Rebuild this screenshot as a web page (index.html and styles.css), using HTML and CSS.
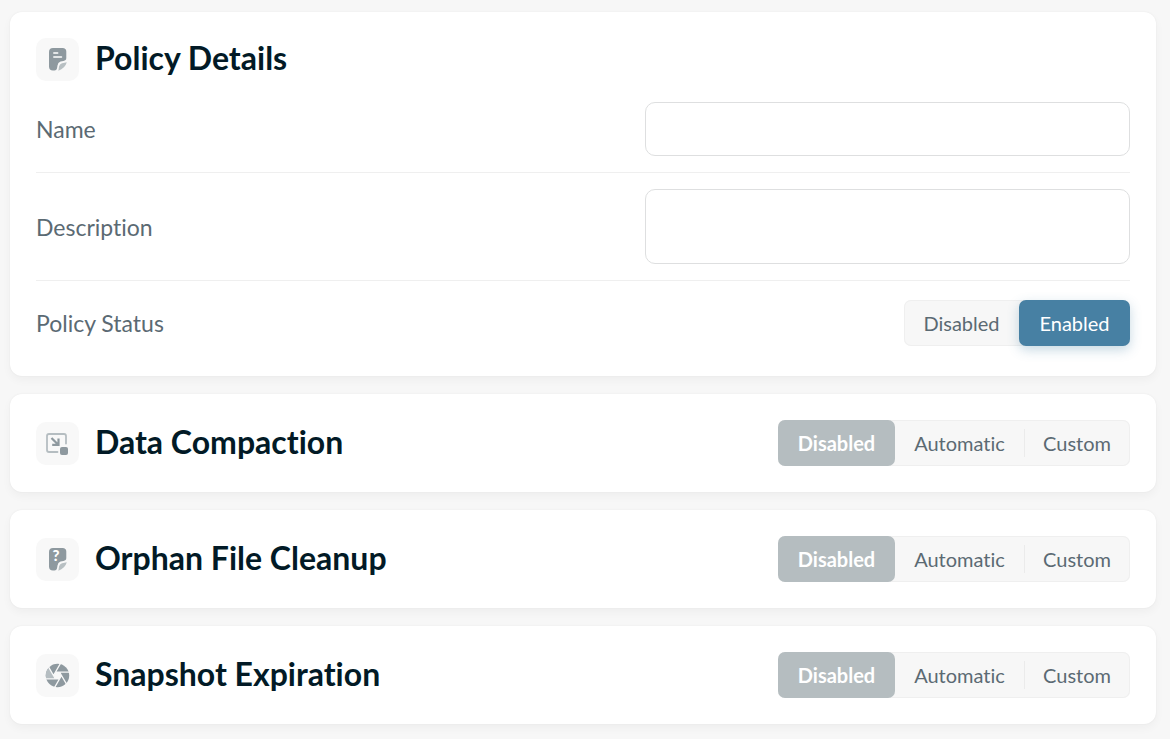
FILE: index.html
```
<!DOCTYPE html>
<html lang="en">
<head>
    <meta charset="UTF-8">
    <meta name="viewport" content="width=device-width, initial-scale=1.0">
    <title>Policy Details</title>
    <link rel="stylesheet" href="styles.css">
</head>
<body>
    <main class="page">
        <section class="card">
            <div class="card-title">
                <svg class="icon" viewBox="0 0 43 43" aria-hidden="true">
                    <path class="dark" d="M17 10H26.500Q30.300 10 30.300 13.500V20Q30.300 22.600 27.500 22.900L24.500 23.500Q21.800 24.300 21.500 27.500L21 30.500Q20.500 32.500 18.500 32.500H17Q13 32.500 13 28.500V14Q13 10 17 10Z"/>
                    <path class="light" d="M22.400 32.800L23 28.500Q23.500 26 26 25.300L30.800 24.300Q29 30.500 22.400 32.800Z"/>
                    <path class="lines" d="M17.800 15H21.700M17.800 19H25.500"/>
                </svg>
                <h2>Policy Details</h2>
            </div>
            <div class="row">
                <label for="name">Name</label>
                <input class="field" type="text" id="name">
            </div>
            <div class="row">
                <label for="description">Description</label>
                <textarea class="field field-tall" id="description"></textarea>
            </div>
            <div class="row row-status">
                <span id="status-label">Policy Status</span>
                <div class="switch switch-two" role="group" aria-labelledby="status-label">
                    <button type="button" aria-pressed="false">Disabled</button>
                    <button type="button" class="enabled" aria-pressed="true">Enabled</button>
                </div>
            </div>
        </section>

        <section class="card card-line">
            <div class="card-title">
                <svg class="icon" viewBox="0 0 43 43" aria-hidden="true">
                    <path class="frame" d="M30 21.500V14Q30 12 28 12H13Q11 12 11 14V28Q11 30 13 30H21.500"/>
                    <path class="arrow" d="M15.500 16L22 22.500M22.500 16.500V22.800H16.200"/>
                    <rect class="dark" x="24" y="25" width="8" height="8" rx="2"/>
                </svg>
                <h2 id="compaction">Data Compaction</h2>
            </div>
            <div class="switch switch-three" role="group" aria-labelledby="compaction">
                <button type="button" class="disabled" aria-pressed="true">Disabled</button>
                <button type="button" aria-pressed="false">Automatic</button>
                <button type="button" class="divided" aria-pressed="false">Custom</button>
            </div>
        </section>

        <section class="card card-line">
            <div class="card-title">
                <svg class="icon" viewBox="0 0 43 43" aria-hidden="true">
                    <path class="dark" d="M17 10H26.500Q30.300 10 30.300 13.500V20Q30.300 22.600 27.500 22.900L24.500 23.500Q21.800 24.300 21.500 27.500L21 30.500Q20.500 32.500 18.500 32.500H17Q13 32.500 13 28.500V14Q13 10 17 10Z"/>
                    <path class="light" d="M22.400 32.800L23 28.500Q23.500 26 26 25.300L30.800 24.300Q29 30.500 22.400 32.800Z"/>
                    <text class="mark" x="20" y="23">?</text>
                </svg>
                <h2 id="orphan">Orphan File Cleanup</h2>
            </div>
            <div class="switch switch-three" role="group" aria-labelledby="orphan">
                <button type="button" class="disabled" aria-pressed="true">Disabled</button>
                <button type="button" aria-pressed="false">Automatic</button>
                <button type="button" class="divided" aria-pressed="false">Custom</button>
            </div>
        </section>

        <section class="card card-line">
            <div class="card-title">
                <svg class="icon" viewBox="0 0 43 43" aria-hidden="true">
                    <g transform="translate(21.500 21.500)">
                        <circle class="dark" r="11.700"/>
                        <path class="blade" d="M-4 0L-8.500 -8.040A11.700 11.700 0 0 0 -11.180 3.460H-2Z"/>
                        <path class="gaps" d="M-2 -3.460H12M2 3.460H-12M-4 0L3 -12.120M4 0L-3 12.120M-2 3.460L-9 -8.660M2 -3.460L9 8.660"/>
                        <path class="hole" d="M-2 -3.460H2L4 0L2 3.460H-2L-4 0Z"/>
                    </g>
                </svg>
                <h2 id="snapshot">Snapshot Expiration</h2>
            </div>
            <div class="switch switch-three" role="group" aria-labelledby="snapshot">
                <button type="button" class="disabled" aria-pressed="true">Disabled</button>
                <button type="button" aria-pressed="false">Automatic</button>
                <button type="button" class="divided" aria-pressed="false">Custom</button>
            </div>
        </section>
    </main>
</body>
</html>
```
FILE: styles.css
```
* {
    box-sizing: border-box;
}

body {
    margin: 0;
    background-color: #f7f7f7;
    color: #5b6a73;
    font-family: Lato, "Open Sans", sans-serif;
    font-size: 23px;
    font-variant-ligatures: none;
    line-height: 28px;
}

.page {
    display: flex;
    flex-direction: column;
    gap: 18px;
    padding: 12px 14px 12px 10px;
}

.card {
    padding: 26px;
    background-color: white;
    border-radius: 12px;
    box-shadow: 0 0 2px rgba(0, 0, 0, 0.06), 0 4px 10px rgba(0, 0, 0, 0.04);
}

.card-line {
    display: flex;
    align-items: center;
    justify-content: space-between;
}

.card-title {
    display: flex;
    align-items: center;
    gap: 16px;
}

h2 {
    margin: 0;
    padding-bottom: 3px;
    color: #021a26;
    font-size: 32px;
    font-weight: 700;
    line-height: 40px;
}

.row {
    display: flex;
    align-items: center;
    justify-content: space-between;
    padding: 16px 0;
    border-bottom: 1px solid #efefef;
}

.card-title + .row {
    margin-top: 5px;
}

.row-status {
    padding: 19px 0 4px;
    border-bottom: none;
}

.field {
    width: 485px;
    height: 54px;
    padding: 12px 16px;
    border: 1px solid #dedfe0;
    border-radius: 10px;
    background-color: white;
    color: #021a26;
    font: inherit;
}

.field-tall {
    height: 75px;
    resize: none;
}

/* segmented buttons */
.switch {
    display: grid;
    height: 46px;
    background-color: #f7f7f7;
    border-radius: 7px;
    box-shadow: inset 0 0 0 1px #efefef;
}

.switch-two {
    grid-template-columns: 115px 111px;
}

.switch-three {
    grid-template-columns: 117px 129px 106px;
}

.switch button {
    padding: 0;
    border: none;
    border-radius: 7px;
    background: none;
    color: #5b6a73;
    font: inherit;
    font-size: 20px;
    cursor: pointer;
}

.switch .enabled {
    background-color: #4780a3;
    color: white;
    box-shadow: 0 4px 12px rgba(71, 128, 163, 0.3);
}

.switch .disabled {
    background-color: #b5bdc0;
    color: white;
    font-weight: 700;
}

.switch .divided {
    background: linear-gradient(#ebebeb, #ebebeb) left center / 1px 28px no-repeat;
}

/* icons */
.icon {
    width: 43px;
    height: 43px;
    border-radius: 10px;
    background-color: #f8f8f8;
    fill: none;
}

.dark {
    fill: #8e999f;
}

.light {
    fill: #b8c0c3;
}

.blade {
    fill: #b5bdc1;
}

.lines {
    stroke: white;
    stroke-width: 1.5;
    stroke-linecap: round;
}

.frame {
    stroke: #b5bdc1;
    stroke-width: 1.8;
    stroke-linecap: round;
}

.arrow {
    stroke: #8e999f;
    stroke-width: 2.2;
}

.mark {
    fill: white;
    font-size: 15px;
    font-weight: 900;
    text-anchor: middle;
}

.gaps {
    stroke: #f8f8f8;
    stroke-width: 1.3;
}

.hole {
    fill: #f8f8f8;
}
```
